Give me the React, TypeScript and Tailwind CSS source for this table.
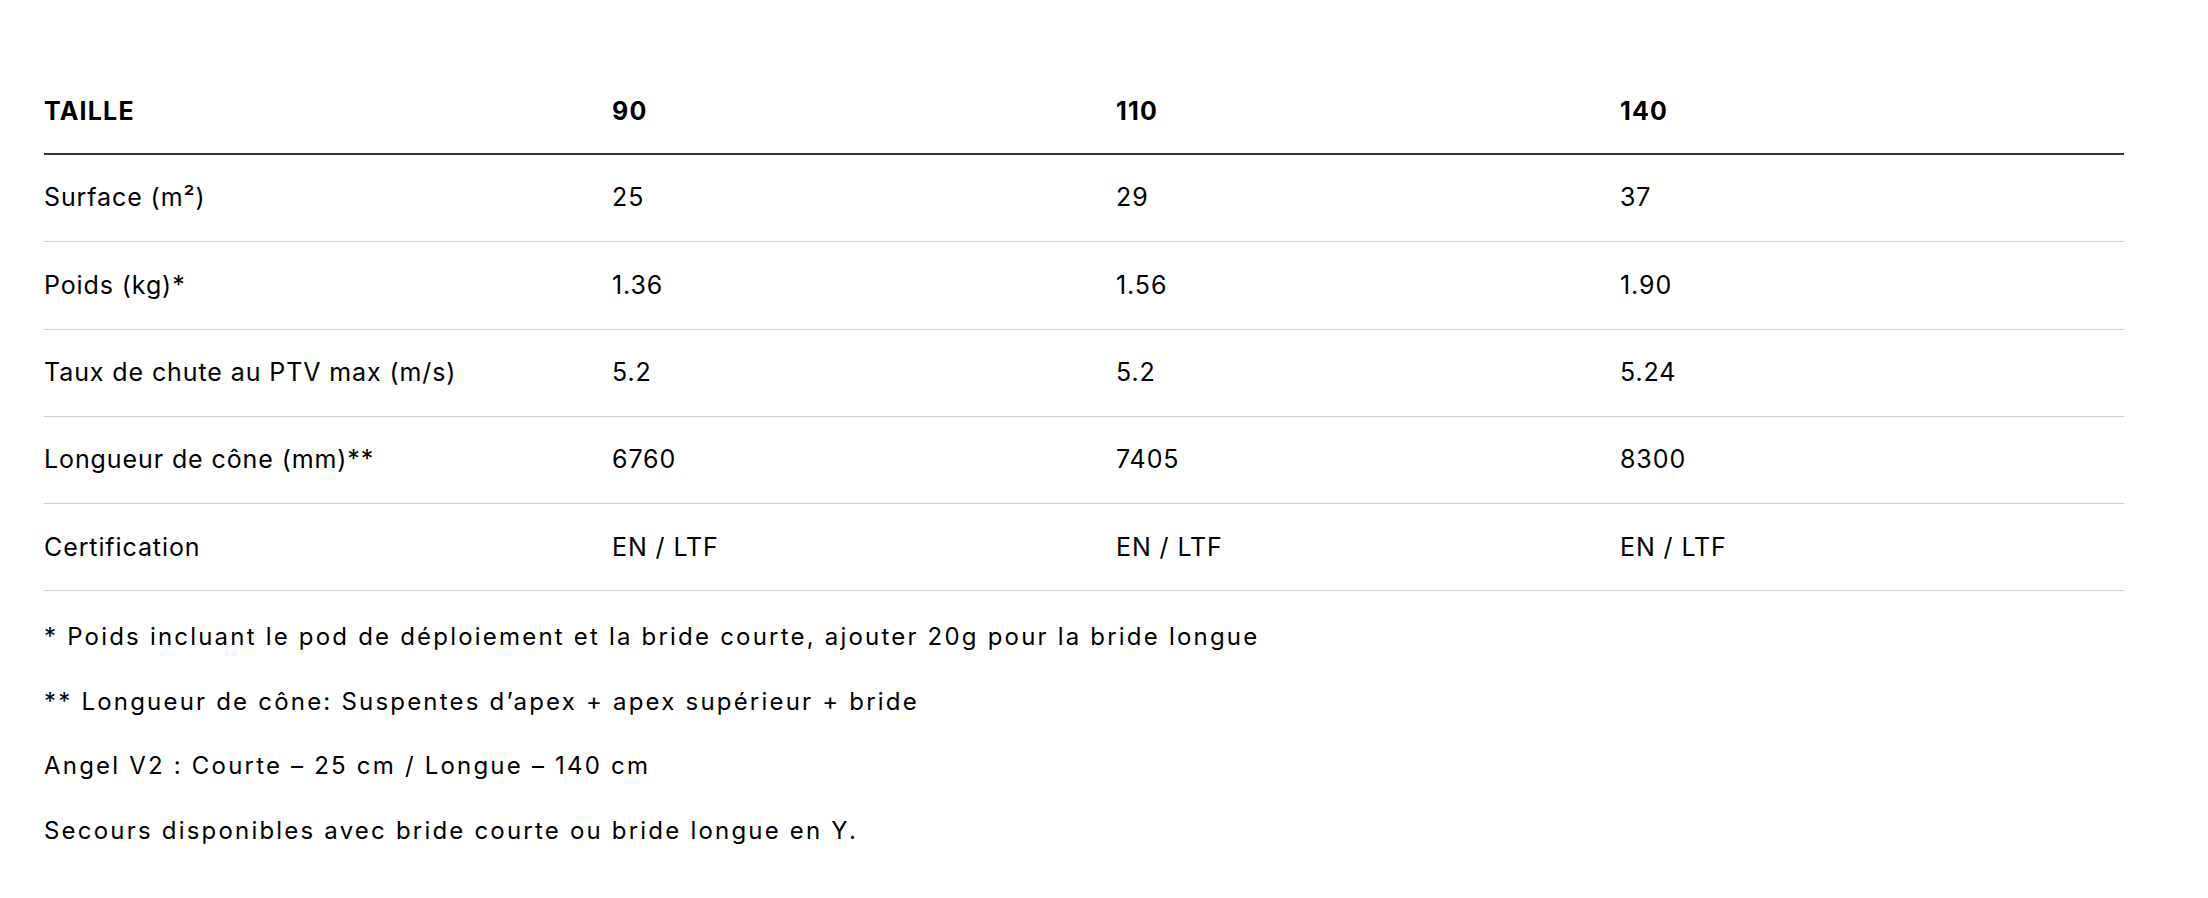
import React from 'react';

const sizes = ['90', '110', '140'];

const rows = [
  { label: 'Surface (m²)', values: ['25', '29', '37'] },
  { label: 'Poids (kg)*', values: ['1.36', '1.56', '1.90'] },
  { label: 'Taux de chute au PTV max (m/s)', values: ['5.2', '5.2', '5.24'] },
  { label: 'Longueur de cône (mm)**', values: ['6760', '7405', '8300'] },
  { label: 'Certification', values: ['EN / LTF', 'EN / LTF', 'EN / LTF'] },
];

const notes = [
  '* Poids incluant le pod de déploiement et la bride courte, ajouter 20g pour la bride longue',
  '** Longueur de cône: Suspentes d’apex + apex supérieur + bride',
  'Angel V2 : Courte – 25 cm / Longue – 140 cm',
  'Secours disponibles avec bride courte ou bride longue en Y.',
];

export default function App() {
  return (
    <div className="min-h-screen bg-white text-black font-['Inter',sans-serif]">
      <div className="ml-[44px] w-[2080px] pt-[70px]">
        {/* Specs table */}
        <div className="grid grid-cols-[568px_504px_504px_504px] h-[85px] items-center border-b-2 border-[#333] text-[25px] font-bold tracking-[1.2px]">
          <div>TAILLE</div>
          {sizes.map((s) => (
            <div key={s}>{s}</div>
          ))}
        </div>
        {rows.map((row) => (
          <div
            key={row.label}
            className="grid grid-cols-[568px_504px_504px_504px] h-[87.3px] items-center border-b border-[#cfcfcf] text-[25px] tracking-[0.9px]"
          >
            <div>{row.label}</div>
            {row.values.map((v, i) => (
              <div key={i}>{v}</div>
            ))}
          </div>
        ))}

        {/* Footnotes */}
        <div className="mt-[28px] flex flex-col gap-[28.5px] text-[24px] leading-[36px] tracking-[2.2px]">
          {notes.map((n) => (
            <p key={n}>{n}</p>
          ))}
        </div>
      </div>
    </div>
  );
}
